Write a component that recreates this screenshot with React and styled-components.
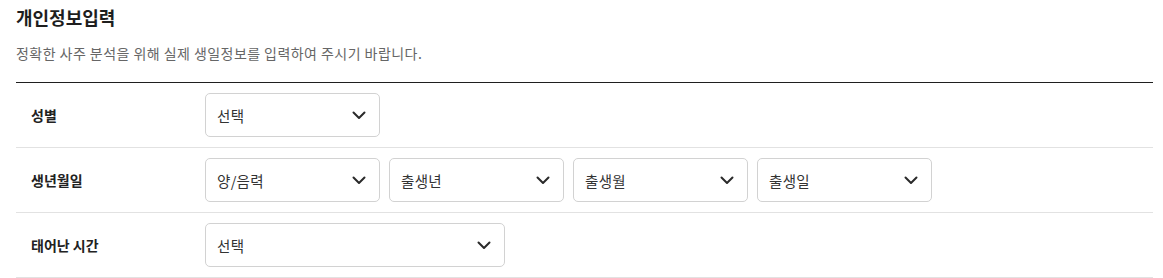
import React from "react";
import styled, { createGlobalStyle } from "styled-components";

const Global = createGlobalStyle`
  html, body { margin: 0; padding: 0; background: #fff; }
  body { font-family: "Noto Sans CJK KR", "Noto Sans", sans-serif; color: #222; }
`;

const Wrap = styled.section`
  padding: 5px 10px 0 16px;
`;

const Title = styled.h2`
  margin: 0;
  font-size: 18px;
  line-height: 24px;
  font-weight: 700;
  color: #1e1e1e;
`;

const Desc = styled.p`
  margin: 14px 0 19px;
  font-size: 14px;
  letter-spacing: 0.45px;
  line-height: 20px;
  color: #666;
`;

const Table = styled.div`
  border-top: 1px solid #1f1f1f;
`;

const Row = styled.div`
  display: grid;
  grid-template-columns: 189px 1fr;
  align-items: center;
  height: 64px;
  border-bottom: 1px solid #e2e2e2;
`;

const Label = styled.div`
  padding-left: 15px;
  font-size: 14px;
  font-weight: 700;
  color: #222;
`;

const Fields = styled.div`
  display: flex;
  gap: 9px;
`;

const SelectBox = styled.div`
  box-sizing: border-box;
  width: ${(p) => p.$w}px;
  height: 44px;
  border: 1px solid #d2d2d2;
  border-radius: 5px;
  display: flex;
  align-items: center;
  justify-content: space-between;
  padding: 0 13px 0 11px;
  font-size: 14.5px;
  letter-spacing: 0.3px;
  color: #333;
  background: #fff;
`;

const Chevron = () => (
  <svg width="14" height="9" viewBox="0 0 14 9" fill="none">
    <path d="M1.5 1.5 L7 7 L12.5 1.5" stroke="#2a2a2a" strokeWidth="2" strokeLinecap="round" strokeLinejoin="round" />
  </svg>
);

const Select = ({ w = 175, children }) => (
  <SelectBox $w={w}>
    <span>{children}</span>
    <Chevron />
  </SelectBox>
);

export default function App() {
  return (
    <>
      <Global />
      <Wrap>
        <Title>개인정보입력</Title>
        <Desc>정확한 사주 분석을 위해 실제 생일정보를 입력하여 주시기 바랍니다.</Desc>
        <Table>
          <Row>
            <Label>성별</Label>
            <Fields>
              <Select>선택</Select>
            </Fields>
          </Row>
          <Row>
            <Label>생년월일</Label>
            <Fields>
              <Select>양/음력</Select>
              <Select>출생년</Select>
              <Select>출생월</Select>
              <Select>출생일</Select>
            </Fields>
          </Row>
          <Row>
            <Label>태어난 시간</Label>
            <Fields>
              <Select w={300}>선택</Select>
            </Fields>
          </Row>
        </Table>
      </Wrap>
    </>
  );
}
